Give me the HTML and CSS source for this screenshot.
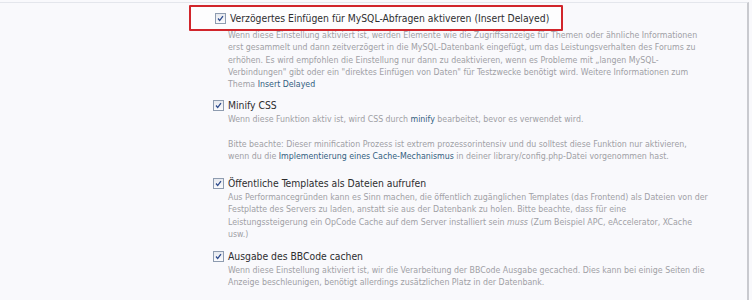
FILE: index.html
```html
<!DOCTYPE html>
<html lang="de">
<head>
  <meta charset="UTF-8" />
  <title>Optionen - Leistung</title>
  <link rel="stylesheet" href="styles.css">
</head>
<body>
  <div class="frame">
    <ul class="options">
      <li class="option">
        <div class="title marked">
          <span class="check"><svg viewBox="0 0 11 11"><path d="M2.5 5.5 L4.5 8 L8.5 2.5" /></svg></span>
          <label>Verzögertes Einfügen für MySQL-Abfragen aktiveren (Insert Delayed)</label>
        </div>
        <div class="desc under">
          <p>Wenn diese Einstellung aktiviert ist, werden Elemente wie die Zugriffsanzeige für Themen oder ähnliche Informationen<br>
          erst gesammelt und dann zeitverzögert in die MySQL-Datenbank eingefügt, um das Leistungsverhalten des Forums zu<br>
          erhöhen. Es wird empfohlen die Einstellung nur dann zu deaktivieren, wenn es Probleme mit „langen MySQL-<br>
          Verbindungen" gibt oder ein "direktes Einfügen von Daten" für Testzwecke benötigt wird. Weitere Informationen zum<br>
          Thema <a href="#">Insert Delayed</a></p>
        </div>
      </li>
      <li class="option">
        <div class="title">
          <span class="check"><svg viewBox="0 0 11 11"><path d="M2.5 5.5 L4.5 8 L8.5 2.5" /></svg></span>
          <label>Minify CSS</label>
        </div>
        <div class="desc">
          <p>Wenn diese Funktion aktiv ist, wird CSS durch <a href="#">minify</a> bearbeitet, bevor es verwendet wird.</p>
          <p>Bitte beachte: Dieser minification Prozess ist extrem prozessorintensiv und du solltest diese Funktion nur aktivieren,<br>
          wenn du die <a href="#">Implementierung eines Cache-Mechanismus</a> in deiner library/config.php-Datei vorgenommen hast.</p>
        </div>
      </li>
      <li class="option">
        <div class="title">
          <span class="check"><svg viewBox="0 0 11 11"><path d="M2.5 5.5 L4.5 8 L8.5 2.5" /></svg></span>
          <label>Öffentliche Templates als Dateien aufrufen</label>
        </div>
        <div class="desc">
          <p>Aus Performancegründen kann es Sinn machen, die öffentlich zugänglichen Templates (das Frontend) als Dateien von der<br>
          Festplatte des Servers zu laden, anstatt sie aus der Datenbank zu holen. Bitte beachte, dass für eine<br>
          Leistungssteigerung ein OpCode Cache auf dem Server installiert sein <em>muss</em> (Zum Beispiel APC, eAccelerator, XCache<br>
          usw.)</p>
        </div>
      </li>
      <li class="option">
        <div class="title">
          <span class="check"><svg viewBox="0 0 11 11"><path d="M2.5 5.5 L4.5 8 L8.5 2.5" /></svg></span>
          <label>Ausgabe des BBCode cachen</label>
        </div>
        <div class="desc">
          <p>Wenn diese Einstellung aktiviert ist, wir die Verarbeitung der BBCode Ausgabe gecached. Dies kann bei einige Seiten die<br>
          Anzeige beschleunigen, benötigt allerdings zusätzlichen Platz in der Datenbank.</p>
        </div>
      </li>
    </ul>
  </div>
</body>
</html>
```

FILE: styles.css
```css
body {
  margin: 0;
  background: #f9f9fc;
  font-family: "DejaVu Sans Condensed", "DejaVu Sans", sans-serif;
  height: 300px;
  overflow: hidden;
}
.frame {
  width: 749px;
  height: 300px;
  margin-top: 2px;
  border-top: 1px solid #e4e6ec;
  border-right: 2px solid #c9cacf;
  box-sizing: border-box;
}
.options {
  list-style: none;
  margin: 0;
  padding: 0 0 0 213px;
}
.option {
  margin-bottom: 5px;
}
.option:nth-child(1) {
  margin-bottom: 7px;
}
.option:nth-child(2) {
  margin-bottom: 13px;
}
.option:nth-child(3) {
  margin-bottom: 8px;
}
.title {
  display: flex;
  align-items: center;
  gap: 4px;
  height: 16px;
  color: #2d2d2f;
  font-size: 10.3px;
}
.title.marked {
  position: relative;
  z-index: 1;
  margin: 2px 0 0 -24px;
  padding-left: 24px;
  width: 346px;
  height: 22px;
  border: 2px solid #d1252b;
  border-radius: 1px;
  background: #fdfdfe;
}
.check {
  width: 9px;
  height: 9px;
  border: 1px solid #8e9cb0;
  background: linear-gradient(#e6e9ef, #fbfbfd);
  display: flex;
}
.check svg {
  width: 9px;
  height: 9px;
}
.check path {
  fill: none;
  stroke: #2c4a8c;
  stroke-width: 1.6;
}
.desc {
  padding-left: 15px;
  width: 500px;
  color: #a0a0a5;
  font-size: 8.75px;
  line-height: 12.25px;
  white-space: nowrap;
}
.desc.under {
  margin-top: -2px;
}
.desc p {
  margin: 0 0 12px;
}
.desc p:last-child {
  margin-bottom: 0;
}
.desc a {
  color: #33607f;
  text-decoration: none;
}
```
